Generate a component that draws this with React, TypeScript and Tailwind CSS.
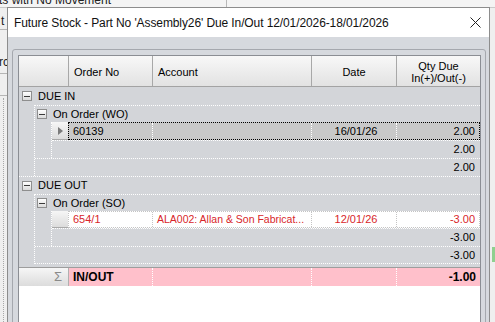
import React from "react";

function MinusBox() {
  return (
    <span className="flex h-[10px] w-[10px] shrink-0 items-center justify-center border border-[#8e8e8e] bg-linear-to-b from-white to-[#dadada]">
      <span className="h-px w-[6px] bg-[#3a3a3a]" />
    </span>
  );
}

function RowHead({ children }: { children?: React.ReactNode }) {
  return (
    <div className="flex w-[16px] shrink-0 items-center justify-center border-b border-[#a9a9a9] bg-linear-to-b from-[#f6f6f6] to-[#dcdcdc]">
      {children}
    </div>
  );
}

function FooterRow({ qty, last }: { qty: string; last?: boolean }) {
  return (
    <div
      className={`flex h-[18px] items-center justify-end border-t border-dotted border-white pr-[5px] ${
        last ? "border-b" : ""
      }`}
    >
      {qty}
    </div>
  );
}

function GroupRow({ label }: { label: string }) {
  return (
    <div className="flex h-[17px] items-center gap-[6px] border-t border-dotted border-white pl-[2px]">
      <MinusBox />
      <span>{label}</span>
    </div>
  );
}

export default function App() {
  return (
    <div className="relative h-[322px] w-[495px] overflow-hidden bg-[#efefef] font-['Liberation_Sans',Arial,sans-serif] text-black">
      {/* window behind */}
      <div className="absolute inset-0">
        <div className="h-[8px] border-b border-[#c9c9c9] bg-[#f4f4f4]">
          <span className="absolute left-[-1px] top-[-7px] text-[12px] leading-[14px] text-[#222]">
            ts with No Movement
          </span>
          <span className="absolute left-[226px] top-0 h-[8px] w-px bg-[#b8b8b8]" />
        </div>
        <span className="absolute left-[1px] top-[14px] text-[12px] leading-[14px] text-[#222]">t</span>
        <span className="absolute left-0 top-[29px] h-px w-[7px] bg-[#b5b5b5]" />
        <span className="absolute left-[-1px] top-[55px] text-[12px] leading-[14px] text-[#222]">rc</span>
        <span className="absolute left-0 top-[73px] h-px w-[7px] bg-[#b5b5b5]" />
        <span className="absolute left-0 top-[95px] h-px w-[7px] bg-[#b5b5b5]" />
        <span className="absolute left-[3px] top-[98px] h-[224px] border-l border-dotted border-[#a8a8a8]" />
        <span className="absolute left-[492px] top-[247px] h-[15px] w-[3px] bg-[#8fd08f]" />
      </div>

      {/* dialog */}
      <div className="absolute left-[7px] top-[7px] flex h-[330px] w-[483px] flex-col border border-[#8d8d8d] bg-[#d6d9de]">
        <div className="flex h-[29px] shrink-0 items-center justify-between bg-white pl-[6px] pr-[8px]">
          <span className="text-[12px] tracking-[-0.1px] text-[#111]">
            Future Stock - Part No 'Assembly26' Due In/Out 12/01/2026-18/01/2026
          </span>
          <svg width="11" height="11" viewBox="0 0 11 11" className="mb-[1px]">
            <path d="M0.5 0.5 L10.5 10.5 M10.5 0.5 L0.5 10.5" stroke="#222" strokeWidth="1" />
          </svg>
        </div>

        <div className="flex-1 pl-[4px] pr-[3px] pt-[12px]">
          <div className="h-full rounded-[3px] border border-[#a5a8ae] pl-[5px] pr-[4px] pt-[5px]">
            <div className="flex h-[290px] w-[463px] flex-col border border-[#8b8e94] bg-white text-[11px]">
              {/* header */}
              <div className="flex h-[31px] shrink-0 border-b border-[#a3a3a3] bg-linear-to-b from-[#f8f8f8] to-[#e2e2e2]">
                <div className="w-[50px] border-r border-[#a8a8a8]" />
                <div className="flex w-[84px] items-center border-r border-[#a8a8a8] pl-[5px] pt-[3px]">
                  Order No
                </div>
                <div className="flex w-[159px] items-center border-r border-[#a8a8a8] pl-[5px] pt-[3px]">
                  Account
                </div>
                <div className="flex w-[85px] items-center justify-center border-r border-[#a8a8a8] pt-[3px]">
                  Date
                </div>
                <div className="flex flex-1 items-center justify-center pt-[2px] text-center leading-[12px]">
                  Qty Due
                  <br />
                  In(+)/Out(-)
                </div>
              </div>

              {/* rows */}
              <div className="shrink-0 bg-[#d3d5d9] pb-[3px]">
                <div className="flex h-[18px] items-center gap-[6px] pl-[3px]">
                  <MinusBox />
                  <span>DUE IN</span>
                </div>
                <div className="ml-[15px] border-l border-dotted border-white">
                  <GroupRow label="On Order (WO)" />
                  <div className="ml-[16px] border-l border-dotted border-white">
                    <div className="flex h-[18px]">
                      <RowHead>
                        <span className="h-0 w-0 border-y-[4px] border-l-[5px] border-y-transparent border-l-[#7b7b7b]" />
                      </RowHead>
                      <div className="flex flex-1 items-center border border-dotted border-black bg-[#c9c9c9]">
                        <div className="flex h-full w-[84px] items-center border-r border-dotted border-white pl-[4px]">
                          60139
                        </div>
                        <div className="h-full w-[159px] border-r border-dotted border-white" />
                        <div className="flex h-full w-[85px] items-center justify-center border-r border-dotted border-white pl-[4px]">
                          16/01/26
                        </div>
                        <div className="flex-1 pr-[4px] text-right">2.00</div>
                      </div>
                    </div>
                    <FooterRow qty="2.00" />
                  </div>
                  <FooterRow qty="2.00" />
                </div>

                <div className="flex h-[18px] items-center gap-[6px] border-t border-dotted border-white pl-[3px]">
                  <MinusBox />
                  <span>DUE OUT</span>
                </div>
                <div className="ml-[15px] border-l border-dotted border-white">
                  <GroupRow label="On Order (SO)" />
                  <div className="ml-[16px] border-l border-dotted border-white">
                    <div className="flex h-[17px]">
                      <RowHead />
                      <div className="flex flex-1 items-center border border-dotted border-[#c4c4c4] bg-white text-[#d8262a]">
                        <div className="flex h-full w-[84px] items-center border-r border-dotted border-[#c4c4c4] pl-[4px]">
                          654/1
                        </div>
                        <div className="flex h-full w-[159px] items-center border-r border-dotted border-[#c4c4c4] pl-[4px] text-[10.5px]">
                          ALA002: Allan &amp; Son Fabricat...
                        </div>
                        <div className="flex h-full w-[85px] items-center justify-center border-r border-dotted border-[#c4c4c4] pl-[4px]">
                          12/01/26
                        </div>
                        <div className="flex-1 pr-[4px] text-right">-3.00</div>
                      </div>
                    </div>
                    <FooterRow qty="-3.00" />
                  </div>
                  <FooterRow qty="-3.00" last />
                </div>
              </div>

              {/* summary */}
              <div className="flex h-[19px] shrink-0 border-t border-[#9d9d9d] font-bold">
                <div className="flex w-[50px] items-center justify-end border-r border-[#b0b0b0] bg-linear-to-b from-[#f6f6f6] to-[#dcdcdc] pr-[6px] text-[13px] font-normal text-[#8a8a8a]">
                  Σ
                </div>
                <div className="flex flex-1 items-center bg-[#ffc0cb] text-[12px]">
                  <div className="flex h-full w-[84px] items-center border-r border-dotted border-white pl-[4px]">
                    IN/OUT
                  </div>
                  <div className="h-full w-[159px] border-r border-dotted border-white" />
                  <div className="h-full w-[85px] border-r border-dotted border-white" />
                  <div className="flex-1 pr-[4px] text-right">-1.00</div>
                </div>
              </div>
              <div className="flex-1 bg-white" />
            </div>
          </div>
        </div>
      </div>
    </div>
  );
}
